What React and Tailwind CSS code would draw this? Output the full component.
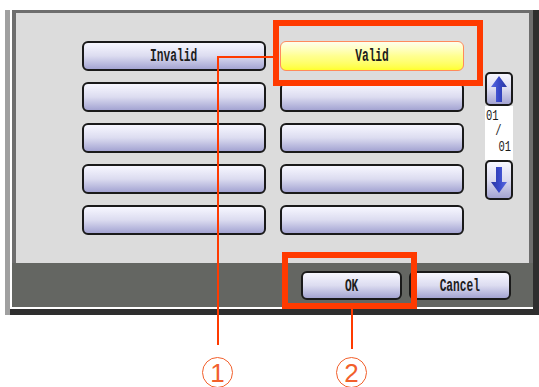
import React from 'react';

const mono = { fontFamily: '"Liberation Mono", "DejaVu Sans Mono", monospace' };

const Label = ({ children }) => (
  <span className="inline-block scale-x-[0.7] scale-y-[1.2] text-[16px] font-bold leading-none text-[#1c1c1c]">
    {children}
  </span>
);

const PanelButton = ({ label, active, className = '' }) => (
  <button
    type="button"
    className={
      active
        ? `flex items-center justify-center rounded-[6px] border-[1.5px] border-[#ff8a5c] bg-gradient-to-b from-[#ffffec] via-[#ffff90] to-[#ffff2a] ${className}`
        : `flex items-center justify-center rounded-[6px] border-2 border-[#1a1a1a] bg-gradient-to-b from-[#f7f7ff] via-[#dcdcf0] to-[#a4a4d2] ${className}`
    }
  >
    {label && <Label>{label}</Label>}
  </button>
);

const Arrow = ({ down }) => (
  <svg width="18" height="28" viewBox="0 0 18 28" className={down ? 'rotate-180' : ''}>
    <defs>
      <linearGradient id={down ? 'ad' : 'au'} x1="0" x2="1" y1="0" y2="0">
        <stop offset="0" stopColor="#5a6ae0" />
        <stop offset="0.5" stopColor="#3848c8" />
        <stop offset="1" stopColor="#2a36a0" />
      </linearGradient>
    </defs>
    <path d="M9 1 L17 12 L12 12 L12 27 L6 27 L6 12 L1 12 Z" fill={`url(#${down ? 'ad' : 'au'})`} />
  </svg>
);

const ScrollButton = ({ down, className = '' }) => (
  <button
    type="button"
    className={`flex items-center justify-center rounded-[5px] border-2 border-[#1a1a1a] bg-gradient-to-b from-[#f7f7ff] via-[#dcdcf0] to-[#a4a4d2] ${className}`}
  >
    <Arrow down={down} />
  </button>
);

const Callout = ({ n, className }) => (
  <div
    className={`absolute flex h-[31px] w-[31px] items-center justify-center rounded-full border-[1.5px] border-[#f2602c] text-[26px] leading-none text-[#f2602c] ${className}`}
    style={{ fontFamily: '"Liberation Sans", Arial, sans-serif' }}
  >
    {n}
  </div>
);

export default function App() {
  const left = ['Invalid', '', '', '', ''];
  const right = ['Valid', '', '', '', ''];

  return (
    <div className="relative h-[387px] w-[539px] overflow-hidden bg-white" style={mono}>
      {/* Device screen */}
      <div className="ml-[5px] mt-[10px] h-[305px] w-[534px] border-l-[5px] border-l-[#a0a0a0] bg-[#2e2e2e] pb-[6px] pr-[6px]">
        <div className="h-full bg-white pb-[2px] pl-[2px]">
          <div className="flex h-full flex-col bg-[#6e6e6e]">
            {/* Content */}
            <div className="mx-[4px] mt-[3px] flex h-[250px] bg-[#dcdcdc] pl-[66px] pt-[28px]">
              <div className="flex w-[184px] flex-col gap-[11px]">
                {left.map((l, i) => (
                  <PanelButton key={i} label={l} className="h-[30px] w-[184px]" />
                ))}
              </div>
              <div className="ml-[14px] flex w-[184px] flex-col gap-[11px]">
                {right.map((l, i) => (
                  <PanelButton key={i} label={l} active={i === 0} className="h-[30px] w-[184px]" />
                ))}
              </div>
              <div className="ml-[21px] mt-[31px] flex w-[28px] flex-col">
                <ScrollButton className="h-[34px] w-[28px]" />
                <div className="flex h-[54px] flex-col bg-white pl-[1px] pr-[2px] pt-[1px] text-[14px] leading-[17px] text-[#1c1c1c]">
                  <span className="inline-block origin-top-left scale-x-[0.75] scale-y-[1.1]">01</span>
                  <span className="-mt-[1px] inline-block scale-x-[0.75] scale-y-[1.1] text-center">/</span>
                  <span className="-mt-[1px] inline-block origin-right scale-x-[0.75] scale-y-[1.1] text-right">01</span>
                </div>
                <ScrollButton down className="h-[40px] w-[28px]" />
              </div>
            </div>
            {/* Footer */}
            <div className="flex flex-1 bg-[#646662] pl-[289px] pt-[8px]">
              <PanelButton label="OK" className="h-[29px] w-[101px]" />
              <PanelButton label="Cancel" className="ml-[7px] h-[29px] w-[102px]" />
            </div>
          </div>
        </div>
      </div>

      {/* Annotations */}
      <div className="absolute left-[273px] top-[20px] h-[66px] w-[210px] border-[6px] border-[#ff3a00]" />
      <div className="absolute left-[218px] top-[56px] h-[2px] w-[55px] bg-[#ff3a00]" />
      <div className="absolute left-[217px] top-[56px] h-[289px] w-[2px] bg-[#ff3a00]" />
      <Callout n="1" className="left-[202px] top-[357px]" />

      <div className="absolute left-[282px] top-[252px] h-[57px] w-[135px] border-[6px] border-[#ff3a00]" />
      <div className="absolute left-[351px] top-[309px] h-[40px] w-[2px] bg-[#ff3a00]" />
      <Callout n="2" className="left-[336px] top-[357px]" />
    </div>
  );
}
